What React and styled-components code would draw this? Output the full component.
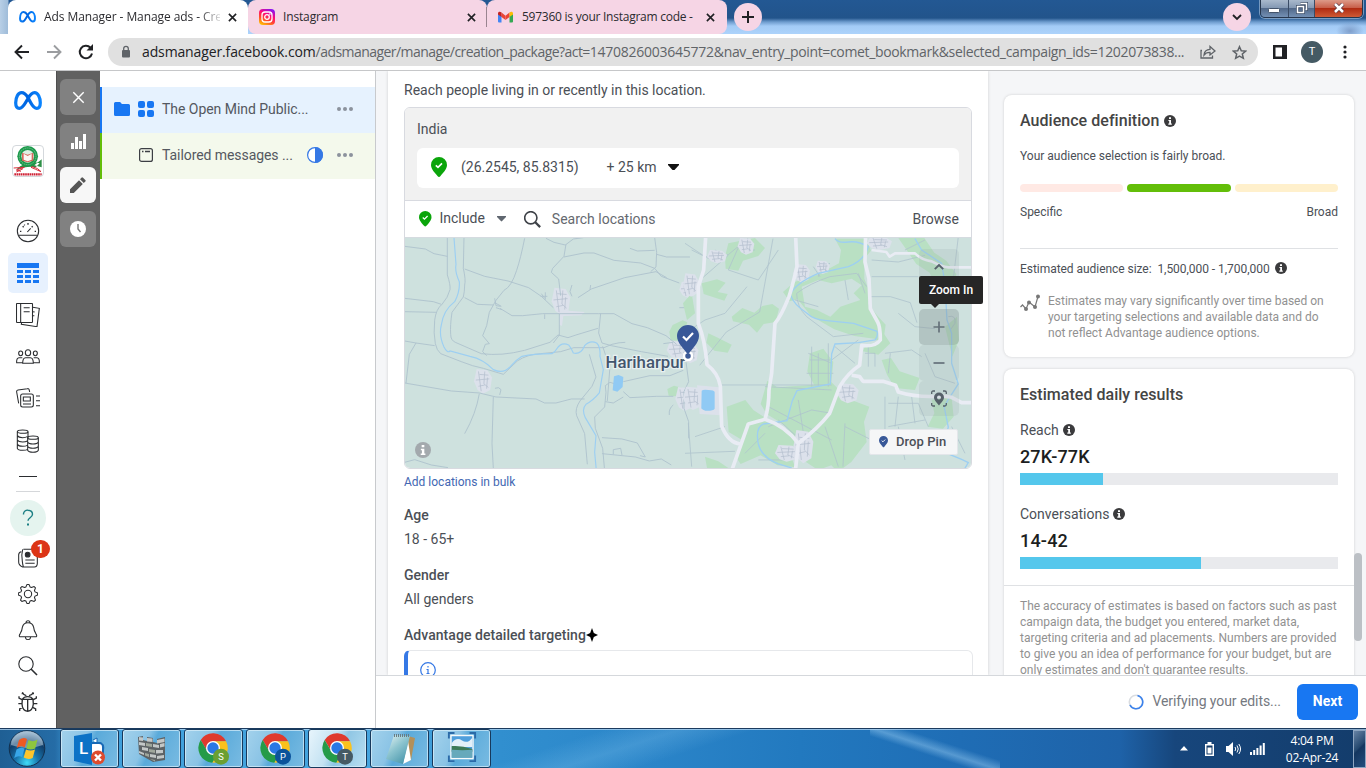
import React from "react";
import styled, { createGlobalStyle } from "styled-components";

const Global = createGlobalStyle`
  * { box-sizing: border-box; }
  html, body { margin: 0; padding: 0; height: 768px; overflow: hidden; }
  body { font-family: Roboto, "Liberation Sans", sans-serif; font-size: 14px; color: #444950; background: #fff; }
  svg { display: block; flex: none; }
`;

/* ---------- shell ---------- */
const Screen = styled.div`
  width: 1366px;
  height: 768px;
  display: flex;
  flex-direction: column;
  overflow: hidden;
`;
const Label = styled.span`
  font-size: ${(p) => p.$size || 14}px;
  line-height: ${(p) => p.$line || 20}px;
  font-weight: ${(p) => p.$weight || 400};
  color: ${(p) => p.$color || "#4b4f56"};
  letter-spacing: ${(p) => p.$track || 0}px;
  white-space: nowrap;
`;

/* ---------- browser ---------- */
const TabStrip = styled.div`
  height: 34px;
  flex: none;
  display: flex;
  padding-left: 8px;
  background:
    radial-gradient(ellipse 14px 9px at 1350px 31px, #7f9fcb, transparent),
    linear-gradient(90deg, #b8cfe6 0, #9fbcd9 8px, transparent 9px),
    linear-gradient(180deg, #235893 0, #22548b 18px, #6f9dcf 22px, #a3cbf6 26px, #add3fb 34px);
`;
const TabShell = styled.div`
  width: ${(p) => p.$w}px;
  height: 34px;
  display: flex;
  align-items: center;
  padding: 0 ${(p) => p.$pr || 11}px 0 11px;
  background: ${(p) => (p.$active ? "#fff" : "#f6d5e5")};
  border-radius: ${(p) => (p.$active ? "8px 8px 0 0" : "8px")};
  border-bottom-left-radius: ${(p) => (p.$active ? 0 : p.$flush ? 0 : 8)}px;
  border-bottom-right-radius: ${(p) => (p.$active || p.$flushR ? 0 : 8)}px;
  gap: ${(p) => p.$gap || 8}px;
`;
const TabTitle = styled.span`
  flex: 1;
  min-width: 0;
  white-space: nowrap;
  font: 12px/18px "Open Sans", "Noto Sans", sans-serif;
  letter-spacing: ${(p) => p.$track || 0}px;
  color: #2b2b2f;
  mask-image: ${(p) => (p.$fade ? "linear-gradient(90deg,#000 88%,rgba(0,0,0,.15) 100%)" : "none")};
`;
const TabRule = styled.div`
  width: 1px;
  height: 20px;
  margin: 7px 0 0 -1px;
  background: #9a8490;
`;
const RoundButton = styled.div`
  width: 28px;
  height: 28px;
  margin: 3px 0 0 ${(p) => p.$ml}px;
  border-radius: 50%;
  background: #f6d5e5;
  display: grid;
  place-items: center;
`;
const WindowControls = styled.div`
  display: flex;
  width: 103px;
  height: 18px;
  margin-left: 9px;
  border: 1px solid #26364d;
  border-top: 0;
  border-radius: 0 0 5px 5px;
  overflow: hidden;
  box-shadow: 0 0 0 1px rgba(200, 220, 240, 0.5);
`;
const WindowButton = styled.div`
  width: ${(p) => p.$w}px;
  padding-bottom: ${(p) => p.$pb || 0}px;
  padding-top: ${(p) => p.$pt || 0}px;
  display: grid;
  place-items: center;
  border-right: ${(p) => (p.$close ? "0" : "1px solid #3a4c66")};
  background: ${(p) =>
    p.$close
      ? "linear-gradient(180deg,#dd9a88 0,#c8604a 45%,#b02c12 50%,#cf5a35 100%)"
      : "linear-gradient(180deg,#a9b9cc 0,#8499b4 45%,#52698a 50%,#7390b4 100%)"};
`;
const Toolbar = styled.div`
  height: 37px;
  flex: none;
  display: flex;
  align-items: center;
  background: #fff;
  border-bottom: 1px solid #c6c7c9;
  padding: 0 13px 0 14px;
`;
const NavIcons = styled.div`
  display: flex;
  gap: 16px;
  width: 94px;
`;
const AddressBar = styled.div`
  width: 1150px;
  height: 28px;
  flex: none;
  border-radius: 14px;
  background: #e0e0e0;
  display: flex;
  align-items: center;
  padding: 0 10px 0 12px;
`;
const Url = styled.div`
  width: 1058px;
  flex: none;
  margin-left: 10px;
  white-space: nowrap;
  font: 14px/20px "Open Sans", "Noto Sans", sans-serif;
  color: #606468;
`;
const UrlPart = styled.span`
  letter-spacing: ${(p) => p.$track}px;
  color: ${(p) => (p.$host ? "#202124" : "inherit")};
`;
const Profile = styled.div`
  width: 22px;
  height: 22px;
  margin: 0 20px 0 14px;
  border-radius: 50%;
  background: #455a64;
  color: #fff;
  font-size: 11px;
  line-height: 22px;
  text-align: center;
`;

/* ---------- page ---------- */
const Page = styled.div`
  height: 657px;
  flex: none;
  display: flex;
`;
const GlobalNav = styled.nav`
  width: 56px;
  display: flex;
  flex-direction: column;
  align-items: center;
  background: #fff;
`;
const NavCell = styled.div`
  width: 56px;
  height: ${(p) => p.$h || 42}px;
  margin-bottom: ${(p) => p.$mb || 0}px;
  display: grid;
  place-items: center;
  position: relative;
`;
const ActiveCell = styled.div`
  width: 40px;
  height: 40px;
  border-radius: 5px;
  background: #e7f1fe;
  display: grid;
  place-items: center;
`;
const Avatar = styled.div`
  width: 32px;
  height: 32px;
  border: 1px solid #d4d8dc;
  border-radius: 4px;
  overflow: hidden;
  background: #fff;
`;
const Dash = styled.div`
  width: ${(p) => p.$w}px;
  height: 1px;
  margin-top: ${(p) => p.$mt}px;
  background: ${(p) => p.$c};
`;
const HelpCircle = styled.div`
  width: 36px;
  height: 36px;
  margin: 8px 0 4px;
  border-radius: 50%;
  background: #e5f4ef;
  display: grid;
  place-items: center;
`;
const Badge = styled.span`
  position: absolute;
  left: 31px;
  top: 0;
  width: 19px;
  height: 18px;
  border-radius: 9px;
  background: #dc3516;
  color: #fff;
  font: 700 12px/18px Roboto, sans-serif;
  text-align: center;
`;
const ModeRail = styled.div`
  width: 44px;
  padding: 8px 4px 8px 3px;
  display: flex;
  flex-direction: column;
  gap: 8px;
  background: #616161;
  border-left: 1px solid #4f4f4f;
`;
const ModeButton = styled.div`
  width: 36px;
  height: 36px;
  border-radius: 6px;
  display: grid;
  place-items: center;
  background: ${(p) => (p.$active ? "#f7f7f7" : "#818181")};
`;
const TreePanel = styled.div`
  width: 276px;
  padding-top: 16px;
  background: #fff;
  border-right: 1px solid #c8cacd;
`;
const TreeRow = styled.div`
  height: 46px;
  display: flex;
  align-items: center;
  padding: 0 22px 2px ${(p) => p.$indent}px;
  border-left: 2px solid ${(p) => p.$edge};
  background: ${(p) => p.$bg};
  gap: 8px;
`;
const TreeName = styled(Label)`
  flex: 1;
`;
const Workspace = styled.div`
  width: 990px;
  display: flex;
  flex-direction: column;
  background: #f5f6f8;
`;
const Columns = styled.div`
  height: 604px;
  display: flex;
  overflow: hidden;
  padding-left: 12px;
`;
const Editor = styled.div`
  width: 600px;
  padding: 9px 16px 0;
  background: #fff;
  box-shadow: 0 0 3px rgba(0, 0, 0, 0.16);
  display: flex;
  flex-direction: column;
  align-items: flex-start;
`;
const LocationBox = styled.div`
  width: 568px;
  height: 362px;
  flex: none;
  margin: 7px 0 3px;
  border: 1px solid #d8dae0;
  border-radius: 6px;
  position: relative;
`;
const Country = styled.div`
  height: 93px;
  padding: 11px 12px;
  background: #f1f1f1;
  border-bottom: 1px solid #d8dae0;
  border-radius: 5px 5px 0 0;
`;
const Place = styled.div`
  height: 40px;
  margin-top: 9px;
  border-radius: 6px;
  background: #fff;
  display: flex;
  align-items: center;
  padding: 0 14px 2px;
`;
const SearchRow = styled.div`
  height: 37px;
  display: flex;
  align-items: center;
  padding: 0 12px 0 14px;
  border-bottom: 1px solid #d5dbe0;
`;
const IncludeLabel = styled(Label)`
  padding-bottom: 2px;
`;
const Gap = styled.div`
  width: ${(p) => p.$w}px;
  flex: ${(p) => (p.$w ? "none" : 1)};
`;
const MapFrame = styled.div`
  height: 230px;
  border-radius: 0 0 5px 5px;
  overflow: hidden;
`;
const MapControls = styled.div`
  position: absolute;
  right: 12px;
  top: 141px;
  width: 40px;
  display: flex;
  flex-direction: column;
`;
const MapButton = styled.div`
  height: ${(p) => p.$h || 36}px;
  margin-bottom: ${(p) => p.$mb || 0}px;
  border-radius: 5px;
  display: grid;
  place-items: center;
  background: ${(p) => (p.$hot ? "rgba(125,140,140,.34)" : "rgba(150,165,165,.18)")};
`;
const Tooltip = styled.div`
  position: absolute;
  left: 514px;
  top: 168px;
  width: 64px;
  height: 28px;
  border-radius: 2px;
  background: #262626;
  color: #fff;
  font-size: 12px;
  font-weight: 500;
  line-height: 28px;
  text-align: center;
  &::after {
    content: "";
    position: absolute;
    left: 12px;
    top: 28px;
    border: 4px solid transparent;
    border-top-color: #262626;
  }
`;
const DropPin = styled.div`
  position: absolute;
  right: 13px;
  bottom: 13px;
  width: 89px;
  height: 26px;
  border-radius: 2px;
  background: #f5f6f7;
  border: 1px solid #e3e6ea;
  display: flex;
  align-items: center;
  gap: 8px;
  padding-left: 9px;
`;
const MapInfo = styled.div`
  position: absolute;
  left: 10px;
  bottom: 10px;
`;
const Heading = styled(Label)`
  margin-top: ${(p) => p.$mt}px;
  display: flex;
  align-items: center;
`;
const Notice = styled.div`
  width: 569px;
  height: 60px;
  flex: none;
  margin-top: 5px;
  padding: 11px 0 0 12px;
  border: 1px solid #e6e8eb;
  border-left: 4px solid #3578e5;
  border-radius: 6px;
`;
const Side = styled.aside`
  width: 350px;
  margin-left: 16px;
  padding-top: 24px;
  display: flex;
  flex-direction: column;
  gap: 12px;
`;
const Card = styled.section`
  height: ${(p) => p.$h}px;
  flex: none;
  border-radius: 8px;
  background: #fff;
  box-shadow: 0 0 3px rgba(0, 0, 0, 0.16);
  display: flex;
  flex-direction: column;
  padding: 0 16px;
`;
const Line = styled.div`
  display: flex;
  align-items: center;
  gap: ${(p) => p.$gap || 0}px;
  justify-content: ${(p) => (p.$spread ? "space-between" : "flex-start")};
  margin-top: ${(p) => p.$mt || 0}px;
`;
const Segment = styled.div`
  width: ${(p) => p.$w}px;
  height: 8px;
  border-radius: 4px;
  background: ${(p) => p.$c};
`;
const Rule = styled.div`
  height: 1px;
  margin: ${(p) => p.$m};
  background: #dfe1e4;
`;
const Paragraph = styled.p`
  margin: 0;
  font-size: 12px;
  line-height: 16px;
  color: #919191;
  letter-spacing: ${(p) => p.$track || 0}px;
  white-space: nowrap;
`;
const Bar = styled.div`
  height: 12px;
  margin-top: ${(p) => p.$mt}px;
  background: linear-gradient(90deg, #54c7ec ${(p) => p.$v}px, #e9eaed ${(p) => p.$v}px);
`;
const ScrollTrack = styled.div`
  width: 12px;
  padding-top: 482px;
`;
const ScrollThumb = styled.div`
  width: 8px;
  height: 88px;
  border-radius: 4px;
  background: #bcc0c5;
`;
const Footer = styled.footer`
  height: 53px;
  display: flex;
  align-items: center;
  justify-content: flex-end;
  padding-right: 8px;
  background: #fff;
  border-top: 1px solid #d5d8dc;
`;
const StatusText = styled(Label)`
  padding-bottom: 2px;
`;
const NextButton = styled.div`
  width: 61px;
  height: 36px;
  margin-left: 16px;
  border-radius: 6px;
  background: #1877f2;
  color: #fff;
  font-weight: 700;
  line-height: 35px;
  text-align: center;
`;

/* ---------- taskbar ---------- */
const Taskbar = styled.div`
  height: 40px;
  flex: none;
  display: flex;
  border-top: 1px solid #1c3b5e;
  box-shadow: inset 0 1px 0 rgba(190, 220, 245, 0.7);
  background:
    linear-gradient(198deg, transparent 38%, rgba(170, 218, 250, 0.4) 50%, transparent 60%) 870px 0 / 130px 40px no-repeat,
    linear-gradient(162deg, transparent 30%, rgba(150, 210, 245, 0.22) 50%, transparent 70%) 490px 0 / 260px 40px no-repeat,
    linear-gradient(90deg, #1f5f94 0, #256ca6 55px, #3f9fdb 75px, #45a5df 400px, #318fcf 500px, #2a84c8 660px, #2279bf 800px, #1f6db5 960px, #1e62a8 1120px, #17467c 1175px, #133c6b 1366px);
`;
const StartOrb = styled.div`
  width: 60px;
  flex: none;
  padding: 1px 0 0 8px;
`;
const TaskButton = styled.div`
  width: 59px;
  height: 39px;
  margin-right: 3px;
  border: 1px solid #17395c;
  border-radius: 3px;
  box-shadow: inset 0 0 0 1px rgba(225, 242, 252, 0.65);
  display: grid;
  place-items: center;
  background: ${(p) =>
    p.$active
      ? "linear-gradient(115deg,#e8f5fc 0,#c3e2f2 40%,#8fc6e4 55%,#b9dff1 100%)"
      : "linear-gradient(115deg,#a3d2ec 0,#8ac3e5 38%,#5aaada 50%,#79bbe2 100%)"};
`;
const Tray = styled.div`
  margin-left: auto;
  display: flex;
  align-items: center;
`;
const Clock = styled.div`
  width: 78px;
  margin-left: 8px;
  font: 12px/17px "Open Sans", "Noto Sans", sans-serif;
  letter-spacing: -0.3px;
  color: #fff;
  text-align: center;
`;
const ShowDesktop = styled.div`
  width: 13px;
  height: 38px;
  margin-left: 2px;
  border: 1px solid #8da5c1;
  background: linear-gradient(135deg, #6783a5 0, #24486f 45%, #143660 50%, #234d7d 100%);
`;

/* ---------- drawings ---------- */
const Cross = ({ size = 9, color = "#202124", w = 1.8 }) => (
  <svg width={size} height={size} viewBox="0 0 10 10">
    <path d="M1 1l8 8M9 1L1 9" stroke={color} strokeWidth={w} />
  </svg>
);
const MetaMark = ({ w }) => (
  <svg width={w} height={w * 0.68} viewBox="0 0 640 436">
    <defs>
      <linearGradient id="metaFill" x1="0" x2="1">
        <stop offset="0" stopColor="#0a7cf4" />
        <stop offset=".45" stopColor="#0064e0" />
        <stop offset="1" stopColor="#0a84ff" />
      </linearGradient>
    </defs>
    <g fill="none" stroke="url(#metaFill)" strokeWidth="74">
      <path d="M320 150C270 70 225 38 172 38C95 38 38 140 38 270C38 350 68 398 122 398C180 398 215 350 262 270L320 172C368 86 408 38 470 38C548 38 602 146 602 270C602 350 574 398 522 398C462 398 428 350 380 262Z" />
    </g>
  </svg>
);
const InstagramMark = () => (
  <svg width="16" height="16" viewBox="0 0 16 16">
    <defs>
      <linearGradient id="ig" x1=".2" y1="1" x2=".7" y2="0">
        <stop offset="0" stopColor="#ffc300" />
        <stop offset=".35" stopColor="#ff4a2c" />
        <stop offset=".65" stopColor="#ff0a78" />
        <stop offset="1" stopColor="#8a14f0" />
      </linearGradient>
    </defs>
    <rect width="16" height="16" rx="4" fill="url(#ig)" />
    <g fill="none" stroke="#fff" strokeWidth="1.3">
      <rect x="3" y="3" width="10" height="10" rx="3" />
      <circle cx="8" cy="8" r="2.3" />
    </g>
    <circle cx="10.9" cy="5.1" r=".8" fill="#fff" />
  </svg>
);
const GmailMark = () => (
  <svg width="15" height="12" viewBox="0 0 30 22">
    <path d="M0 4v16a2 2 0 0 0 2 2h5V8z" fill="#4285f4" />
    <path d="M30 4v16a2 2 0 0 1-2 2h-5V8z" fill="#34a853" />
    <path d="M23 2l-8 6.500V17l8-6z" fill="#ea4335" />
    <path d="M7 2l8 6.500V17l-8-6z" fill="#ea4335" />
    <path d="M0 4C0 0 4-1 7 2v9L0 6z" fill="#c5221f" />
    <path d="M30 4C30 0 26-1 23 2v9l7-5z" fill="#fbbc04" />
  </svg>
);
const Pin = ({ w, fill }) => (
  <svg width={w} height={w * 1.25} viewBox="0 0 16 20">
    <path d="M8 0a8 8 0 0 1 8 8c0 4-4 8-6.500 11q-1.500 1.800-3 0C4 16 0 12 0 8a8 8 0 0 1 8-8z" fill={fill} />
    <path d="M4.800 8.300l2.200 2.100 4-4" fill="none" stroke="#fff" strokeWidth="1.600" />
  </svg>
);
const Info = ({ size = 12, fill = "#3b3b3d" }) => (
  <svg width={size} height={size} viewBox="0 0 12 12">
    <circle cx="6" cy="6" r="6" fill={fill} />
    <path d="M5 2.300h2v1.600H5zM4.400 5H7v3.600h.8v1.100H4.300V8.600h.9V6.100h-.8z" fill="#fff" />
  </svg>
);
const Caret = ({ w, fill }) => (
  <svg width={w} height={w * 0.6} viewBox="0 0 10 6">
    <path d="M0 0h10v1L5.700 5.700q-.7.600-1.400 0L0 1z" fill={fill} />
  </svg>
);
const Dots = () => (
  <svg width="16" height="4" viewBox="0 0 16 4" fill="#8c939d">
    <circle cx="2" cy="2" r="2" /><circle cx="8" cy="2" r="2" /><circle cx="14" cy="2" r="2" />
  </svg>
);
const Magnifier = ({ size, w, color }) => (
  <svg width={size} height={size} viewBox="0 0 20 20" fill="none" stroke={color} strokeWidth={w}>
    <circle cx="8" cy="8" r="7.200" />
    <path d="M13 13l6 6" strokeWidth={w * 1.4} />
  </svg>
);
/* Line icons share one frame with a thin dark stroke. */
const LineIcon = ({ children, box = "0 0 72 72", size = 24, w = 3.2 }) => (
  <svg width={size} height={size} viewBox={box} fill="none" stroke="#2b2d30" strokeWidth={w}>
    {children}
  </svg>
);
const Gauge = () => (
  <LineIcon>
    <circle cx="36" cy="36" r="32" />
    <path d="M7 49H65M34 39L44 28" />
    <path d="M12 37h4M20 22l3 3M36 12v5M50 22l-3 3M56 37h4M25 17l1 2" strokeWidth="4" />
  </LineIcon>
);
const TableIcon = () => (
  <svg width="22" height="20" viewBox="0 0 22 20" fill="#1877f2">
    <path d="M0 0h22v5H0zM0 7h6v3H0zM8 7h6v3H8zM16 7h6v3h-6zM0 12h6v3H0zM8 12h6v3H8zM16 12h6v3h-6zM0 17h6v3H0zM8 17h6v3H8zM16 17h6v3h-6z" />
  </svg>
);
const Books = () => (
  <LineIcon>
    <rect x="1.500" y="1.500" width="48" height="57" rx="2" />
    <path d="M14 1v58M23 14h18M23 26h18M50 13l20 3-7 55-47-7 1-6M50 26l6 1M50 38l5 .5" />
  </LineIcon>
);
const People = () => (
  <LineIcon>
    <ellipse cx="36" cy="23" rx="8" ry="9" />
    <ellipse cx="14" cy="25" rx="6" ry="7" />
    <ellipse cx="58" cy="25" rx="6" ry="7" />
    <path d="M20 55q0-17 9-17h14q9 0 9 17zM20 53H2q-1-14 7-15h10M52 53h18q1-14-7-15H53" />
  </LineIcon>
);
const Catalog = () => (
  <LineIcon>
    <rect x="14" y="21" width="38" height="39" rx="6" />
    <path d="M22 30h21v12H22zM21 51h24M60 27h12M60 41h12M60 56h12M8 49L2 15q-1-5 4-6l28-4q5-1 6 5l1 5" />
  </LineIcon>
);
const Coins = () => (
  <LineIcon>
    <ellipse cx="20" cy="8" rx="16" ry="5" />
    <ellipse cx="51" cy="26" rx="16" ry="5" />
    <path d="M4 8v50q2 6 16 6 11 0 15-3M36 8v18M4 20q4 6 16 6 9 0 14-3M4 33q4 6 16 6 9 0 14-3M4 46q4 6 16 6 9 0 14-3M35 26v38q3 6 16 6 13 0 16-6V26M35 39q3 6 16 6 13 0 16-6M35 52q3 6 16 6 13 0 16-6" />
  </LineIcon>
);
const News = () => (
  <LineIcon size={20} box="0 0 60 60">
    <path d="M16 4h34q8 0 8 8v34q0 11-9 11H14Q2 52 2 42V20q1-8 8-9M14 4q-5 18-1 36 1 10 3 16M22 36h28M22 46h28" />
    <circle cx="29" cy="20" r="7" fill="#2b2d30" />
  </LineIcon>
);
const Gear = () => {
  const pts = [];
  for (let i = 0; i < 32; i++) {
    const a = ((i - 0.5) * Math.PI) / 16;
    const r = i % 4 < 2 ? 29 : 22;
    pts.push(`${(30 + r * Math.sin(a)).toFixed(1)} ${(30 - r * Math.cos(a)).toFixed(1)}`);
  }
  return (
    <LineIcon size={20} box="0 0 60 60">
      <path d={`M${pts.join("L")}Z`} strokeLinejoin="round" />
      <circle cx="30" cy="30" r="11" />
    </LineIcon>
  );
};
const Bell = () => (
  <LineIcon size={20} box="0 0 60 60">
    <path d="M5 50Q2 47 7 40 12 32 13 22 16 8 30 8 44 8 47 22 48 32 53 40 58 47 55 50ZM24 8q0-6 6-6t6 6M22 51q1 8 8 8t8-8" />
  </LineIcon>
);
const Bug = () => (
  <LineIcon size={20} box="0 0 60 60" w={4}>
    <path d="M13 22q5-8 16-8t16 8l1 14q-2 20-17 22Q13 56 12 36zM14 22h30M29 22v36M13 1q3 8 12 10M46 1q-3 8-13 10M11 5h6M42 5h6M12 23L3 18v-5M46 23l9-5v-5M12 35H1M46 35h12M14 46l-9 5v6M44 46l9 5v6" />
  </LineIcon>
);
const AcademyLogo = () => (
  <svg width="30" height="30" viewBox="0 0 90 90">
    <path d="M86 40l-22 18 22 6zM12 68q32-28 68-16l-12 12q-28-6-54 6z" fill="#2d8f46" />
    <circle cx="44" cy="31" r="31" fill="#1b9a4b" />
    <circle cx="44" cy="31" r="25" fill="none" stroke="#8fc7a3" strokeWidth="3" strokeDasharray="3 3" />
    <circle cx="44" cy="31" r="19" fill="#dff0e4" />
    <path d="M27 20l17 6 17-6v24l-17 5-17-5z" fill="#d5685c" />
    <path d="M32 23l12 7 12-7v18l-12 5-12-5z" fill="#fbf7f4" />
    <path d="M2 66l32-2-24 8 14 4M10 78l20-10M58 62q18 4 26 15-18-8-30-13z" fill="none" stroke="#d62f3c" strokeWidth="3" />
    <path d="M4 85h82" stroke="#cf2034" strokeWidth="7" strokeDasharray="5 1.500" />
  </svg>
);
const ChromeTask = ({ letter, color }) => (
  <svg width="34" height="34" viewBox="0 0 51 51">
    <path d="M5.540 12.030A22 22 0 0 1 43.600 14L24 14 15.340 29z" fill="#df3a2e" />
    <path d="M43.600 14A22 22 0 0 1 22.860 45.970L32.660 29 24 14z" fill="#fbc11c" />
    <path d="M22.860 45.970A22 22 0 0 1 5.540 12.030L15.340 29H32.660z" fill="#259b48" />
    <circle cx="24" cy="24" r="10.500" fill="#fff" />
    <circle cx="24" cy="24" r="8.500" fill="#2a78e4" />
    <circle cx="36" cy="37" r="12" fill={color} />
    <text x="36" y="42" fontSize="14" fill="#fff" textAnchor="middle" fontFamily="Roboto, sans-serif">{letter}</text>
  </svg>
);
const Orb = () => (
  <svg width="38" height="38" viewBox="0 0 38 38">
    <defs>
      <radialGradient id="orb" cx=".5" cy=".9" r=".9">
        <stop offset="0" stopColor="#3fdcf8" />
        <stop offset=".35" stopColor="#1976ae" />
        <stop offset=".7" stopColor="#103e6a" />
        <stop offset="1" stopColor="#8fb0cb" />
      </radialGradient>
    </defs>
    <circle cx="19" cy="18.500" r="17.800" fill="url(#orb)" stroke="#12304e" />
    <path d="M3 15a16 14 0 0 1 32 0q-16 6-32 0z" fill="#dcebf5" opacity=".45" />
    <path d="M11 10q4.500-3.500 8-1l-2.300 8.500q-4-2.500-8 .5z" fill="#ee5a24" />
    <path d="M20.500 10q4.500 2.500 9-.5l-2.300 9q-4.500 2-8.900 0z" fill="#8ec63f" />
    <path d="M8.500 19.500q4-3 8-1l-2.300 8.500q-4-2-8 1z" fill="#38a6e8" />
    <path d="M18 19.500q4.500 2 9 0l-2.300 8.500q-4.500 2-9-.5z" fill="#fdc52c" />
  </svg>
);
const LyncTask = () => (
  <svg width="34" height="34" viewBox="0 0 34 34">
    <path d="M20 8l4-2v5c6-2 8 4 6 8" fill="#fff" stroke="#1769b5" />
    <rect x="16" y="11" width="14" height="13" rx="4" fill="#fff" stroke="#1769b5" strokeWidth="2" />
    <path d="M1 4L19 1v32L1 29z" fill="#0c72c6" />
    <text x="6" y="22" fontSize="17" fontWeight="500" fill="#fff" fontFamily="Roboto, sans-serif">L</text>
    <circle cx="25" cy="25.500" r="7" fill="#dd4b2e" />
    <path d="M22 22.500l6 6M28 22.500l-6 6" stroke="#fff" strokeWidth="2.400" />
  </svg>
);
const WallTask = () => (
  <svg width="32" height="30" viewBox="0 0 32 30">
    <path d="M2 3l5-1v4l4 1V3l6 1v4l4 1V5l8-2v23l-12 2L3 20z" fill="#5d6265" />
    <g fill="#c3c7c7">
      <path d="M3 3l4 .5v3.500L3 6.500zM11 4l5.500.6v3.400L11 7.500zM21 6l7.500-1.500v3.500L21 9.500zM3 8l6 1v3l-6-1zM17 10l6 1v3l-6-1zM24 10l4.500-1v3.500l-4.500 1zM6 13l6 1v3l-6-1zM20 16h7v3l-7 .5zM3 17l5 2v2l-5-2zM14 20l6 1v3l-6-1zM21 22l7-1v3l-7 1z" />
    </g>
    <g fill="#a0a79c">
      <path d="M10 9l6 1v3l-6-1zM13 15l6 1v3l-6-1zM9 19l4 1v3l-4-1.500zM14 25l5 1v1.500z" />
    </g>
  </svg>
);
const NotepadTask = () => (
  <svg width="32" height="34" viewBox="0 0 32 34">
    <defs>
      <linearGradient id="pad" x2=".7" y2="1">
        <stop offset="0" stopColor="#e8f4f3" /><stop offset=".5" stopColor="#8cc4cf" /><stop offset="1" stopColor="#4b98ad" />
      </linearGradient>
    </defs>
    <path d="M24 4l7 2-4 22-7 3z" fill="#b3905a" />
    <path d="M24 9l3 19-8 4z" fill="#fff" />
    <path d="M10 3l16 1-7 28L2 27z" fill="url(#pad)" />
    <path d="M10 3.500h16" stroke="#697d83" strokeWidth="3" strokeDasharray="1 1" />
  </svg>
);
const PhotoFrame = styled.div`
  padding-bottom: 4px;
`;
const PhotoTask = () => (
  <PhotoFrame>
    <svg width="30" height="30" viewBox="0 0 30 32">
      <path d="M1 7V1h6M23 1h6v6M29 25v6h-6M7 31H1v-6" fill="none" stroke="#2b6aa8" strokeWidth="2" />
      <rect x="2.500" y="3" width="25" height="26" rx="1" fill="#f7fafa" />
      <rect x="4" y="4.500" width="22" height="23" fill="#4f9fdc" />
      <path d="M4 12q5-7 11-3t11-3v10H4z" fill="#e3f0f9" />
      <path d="M4 15q10-1 22 3v3H4z" fill="#3d7a58" />
      <path d="M4 19q12 1 22 0v8.500H4z" fill="#67a9bb" />
    </svg>
  </PhotoFrame>
);

/* ---------- map ---------- */
/* Villages are clusters of short lanes over a pale patch. */
const Village = ({ x, y, w, h }) => (
  <g transform={`translate(${x} ${y})`}>
    <path
      d={`M${w * 0.15} 0L${w * 0.75} ${h * 0.05}L${w} ${h * 0.35}L${w * 0.9} ${h * 0.85}L${w * 0.5} ${h}L${w * 0.2} ${h * 0.85}L0 ${h * 0.5}Z`}
      fill="#dce1eb"
    />
    <path
      d={`M${w * 0.25} ${h * 0.1}L${w * 0.4} ${h * 0.9}M${w * 0.1} ${h * 0.45}L${w * 0.85} ${h * 0.4}M${w * 0.6} ${h * 0.1}L${w * 0.55} ${h * 0.6}L${w * 0.8} ${h * 0.75}M${w * 0.25} ${h * 0.7}L${w * 0.6} ${h * 0.65}M${w * 0.3} ${h * 0.22}L${w * 0.8} ${h * 0.25}M${w * 0.75} ${h * 0.35}L${w * 0.7} ${h * 0.8}`}
      stroke="#b3bfce" strokeWidth="2.200" fill="none"
    />
  </g>
);
const MapArt = () => (
  <svg width="566" height="230" viewBox="0 0 566 230">
    <rect width="566" height="230" fill="#cee1de" />
    <g transform="translate(-5 -3) scale(.3333)">
      <g fill="#b9e0c3">
        <path d="M808 290l10-20 30-14 14 6-6 20-20 22 6 14-30-2zM862 198l12-10v50h-14zM802 462l20-10 24 6 4 12-24 14-20-2z" />
      </g>
      <Village x={455} y={158} w={56} h={82} />
      <path d="M480 225l74 6-10 10-54 2-4 30-8-4z" fill="#dce1eb" />
      <Village x={222} y={402} w={54} h={74} />
      <Village x={838} y={140} w={50} h={48} />
      <Village x={800} y={318} w={70} h={56} />
      <Village x={826} y={456} w={56} h={72} />
      <g fill="none" stroke="#aec2cd" strokeWidth="2.700">
        <path d="M142 8V120q10 30 8 44-6 24-24 44-18 14-22 48-4 40 2 70 4 20 16 30l62 24q34 14 66 20l60 18 42-40q30-20 70-22l60-6 40-12h90l24-10q22-6 40-6" />
        <path d="M192 8l-2 92q8 36 4 50 0 20-4 36-18 24-34 46-6 40-4 66 0 18 14 24l78 34q60 8 130-10l76-24 24-22 30 8 24-8 66-20" />
        <path d="M14 34l62 8 26 14 40 8M14 190l86 10 24 8M14 230l94 2M14 318l34 6 56 8M48 324l-20 34-10 86M14 444l140 24 84 6 50 12 120 6 26 12h34l46-12h40M238 476q-10 60-44 120M280 486l-4 140 4 74" />
        <path d="M194 102l60 22 70 14 62 20 38 26 36 34M194 188l38 20 48 2M374 10q-12 60-24 96-16 50-38 60l-24 30-20 36-8 40-12 30 20 24-12 2-8 22 12 12" />
        <path d="M284 190l4 22 14 2M300 220l36 22h32l60-6h50l8 0h110l46 0 54 30 46 12 56 24 32 26" />
        <path d="M438 10l24 12 34 8 24-18 30-4M498 28l-6 36-34 36-4 12 22 20 6 50M492 66l60-12h30l60 22 80 8 42 16 20 24 54 20M690 40l22 8 52-2M764 8l6 44-2 44-16 14M770 58l30 8h70M534 188l40-26 100-34 94-18 32 18M478 236v64M460 324l18-24M602 236l-6 58 10 30 28 8 90 18 80 14M572 150l-2 14M516 150l-6 20 6 14" />
        <path d="M568 358l20 68-12 28-36 44q-16 24-10 44l24 54 8 92M608 334l10 30M650 448l-20-6-14 10 2 20-4 44-30 30 2 34 22 60 8 90M632 368l-10 130M616 500l24 4 30-18M670 440l80-18h60l40-16M670 470l20 18 80-4h50M606 608l60 4 46 12 24 42-16-4M606 656l100 10 42 12 36-6 30 18M640 658v-14l22-4 4 20M14 682l30-8 50 16 50 8M858 380l8 60-14 30v50l14 40v50" />
        <path d="M424 176l10 14M436 172v22M422 184h20M434 238v14M286 204l18 10M288 218l18 6M285 460q12-6 18 4l-4 16M838 218h30M790 326l30-4M820 510q-14 10-12 30" />
      </g>
      <g fill="none" stroke="#9dcff2" strokeWidth="3.500">
        <path d="M162 8l6 80q-4 22 10 52 2 30-14 60-34 26-40 70-8 30 8 66 10 20 18 12l60 16q40 8 70 40 30 14 50-8 16-20 36-32 36-8 90-8 10-6 14-14 14-22 36-12 8 10 14 24 22 6 34-22 16-18 36-8 12 12 10 40l10 40-12 70q-20 24-40 34-14 14-2 40l32 54-4 50 6 64" />
      </g>
      <path d="M642 424l14-4 14 6-2 30-16 14-14-4z" fill="#90caf4" />
    </g>
    <g transform="translate(280 -98) scale(.3333)">
      <g fill="#b9e0c3">
        <path d="M130 310l80-16 30 30-20 24-46 14-14 30-38-6-2-36z" />
        <path d="M50 430l46-12 26 10-24 28 30 6-10 20-62-20z" />
        <path d="M450 296h94l14 36-20 24v60l16 40-4 36 28 36 24 26-8 58-26-16-60-8-60-20-70-40-40-50-24 6-20-28 34-30 70-22 64-34 6-40z" />
        <path d="M140 530l32-26 36 14 24-20 30-6 20 14-10 40-36 6-20 26-24-24-48-10z" />
        <path d="M70 580l30 14 40 20-12 24-40-6-24-24z" />
        <path d="M20 460l10 60-24 20-12-50z" />
        <path d="M375 640l40-14 30 40-6 60 50 50 64 24-16 46 8 60-46 60-40 30-20-20-40 14-60-40-10-60-30-34-54-34-18-30 20-70 30 20 110-8-20-40z" />
        <path d="M560 520l26 20 10 40 20 30-36 34-46-10 8-20 46-10z" />
        <path d="M590 660l28-6 26 40 60 20-14 36-60-6-24-40z" />
        <path d="M640 294h78l30 44 36 24 30 40-10 66-50-20-20-50-40-26z" />
        <path d="M125 800l56-20 24 30 40 26 60 30 30 40-20 36 16 40-54-6-50-30-60 26-14-20 22-50-44-26z" />
        <path d="M60 950l40 14 30 20H66zM740 780l60-10 6 60-32 36-46-6 20-40zM780 560l36-30 6 70-20 50z" />
      </g>
      {/* a pale clearing inside the river bend */}
      <path d="M350 440l50-20 40 10 60-14 30 20-24 24 20 20-60 20-30 30-40-20-36-10z" fill="#cee1de" />
      <g fill="none" stroke="#afc3cd" strokeWidth="2.400">
        <path d="M264 296l-40 220-100 60-80 100M0 310l60 40 70-6 60-50M130 346l-80 70M170 300l-40 90 90 30 60-90M0 580l60-40 60-20 66-80M110 735h330M240 740l200 10M330 480l70 20M720 300l-60 30M800 460l20-170M560 410h140M560 360l80 6 80-20M556 470h60l60 18 20 60M640 520l50 40 60 6M600 640l80-10 30 20M610 700l6-60" />
        <path d="M600 770v140M610 790h90l30 70M610 860l110-20M640 770l-10 90M680 770l10 80" />
        <path d="M335 460q40-30 100-50l80-10 30 40M335 460q0 40 30 70l80 60 90-10M480 420l10 60M370 640l70 30M380 620v120M400 640v100M430 610v130M375 660h60M365 700h80M450 620l60 50M440 660l80-60M520 400l20 60" />
        <path d="M250 800l190 100M250 860l130-50 60 10M280 840l90 80M340 780l20 130M420 860l40 120M480 850l-6 130M10 850l10 130M120 860l-90 30M0 940l150-6M180 940l60-60M220 960h80M560 900l-80-40M800 860l40 80M720 640l30 70 60 20M640 860l20 100" />
        <path d="M385 380l20 30M410 370l-10 40M415 380l20-10M20 330l60 30M90 330l30 20M170 300l30 30M180 330h30M540 640h30v40M550 620v60M790 530q24-6 20 20l-14 20" />
      </g>
      <Village x={66} y={330} w={60} h={40} />
      <Village x={158} y={294} w={50} h={50} />
      <Village x={-6} y={400} w={48} h={70} />
      <Village x={325} y={372} w={50} h={56} />
      <Village x={392} y={362} w={42} h={40} />
      <Village x={545} y={290} w={76} h={40} />
      <Village x={455} y={730} w={66} h={60} />
      <Village x={-10} y={610} w={50} h={60} />
      <Village x={-6} y={740} w={60} h={70} />
      <Village x={270} y={915} w={70} h={50} />
      <Village x={325} y={870} w={60} h={100} />
      <path d="M36 736l66 6 6 84-64-4z" fill="#dce1eb" />
      <g fill="none" stroke="#9dcff2" strokeWidth="4">
        <path d="M450 296q10 14 40 10t60 14q-10 40-60 60l-90 20q-70 30-84 64 10 30 50 56 20 20 60 22l80 8 70 24q4 14-6 26l-50 8-70 4-10 30-4 90-100 20-14 30-16 60-70 10q-26 10-16 60 10 40 60 60l40 12M690 296l20 34 60 40 10 60 6 110 14 40v90l20 62-32 50-10 20 12 60-20 60 20 20 40 16 20 10-30 50" />
      </g>
      <g fill="none" stroke="#e9ecf4" strokeWidth="11" strokeLinejoin="round">
        <path d="M62 290l-6 100-16 50v110q20 50 26 124 34 26 40 64l4 120q20 50 56 54M332 290l4 90q-14 60-24 90-24 60-42 80l-10 150-8 50q0 50-12 88l-50 14-50 140M240 838q60 20 100 72l-8 76M340 910q60-46 94-90l30-80q24-40 60-64l6-60q40 6 56-16 0-40-8-54l-22-40-4-90-12-50 2-90 30-20M500 706l24 4 10 14h60l38 12 8 20q60 18 130 12l30 4 30 16h30" />
        <path d="M560 330l44 6 10 14 16-10h60q20 20 50 24 30 16 50 18h70" strokeWidth="8" />
      </g>
      <path d="M50 752q4-4 20-2 18 0 19 6v50q-4 7-28 6-12-4-12-8z" fill="#90caf4" />
    </g>
    <g>
      <text
        x="200.500" y="130" fontSize="16.500" fontWeight="500" textLength="80" lengthAdjust="spacingAndGlyphs"
        fontFamily="Roboto, sans-serif" fill="#43556d" stroke="#e8f0f1" strokeWidth="2.500" paintOrder="stroke"
      >
        Hariharpur
      </text>
      <circle cx="283" cy="118" r="4" fill="#3d5a96" stroke="#fff" strokeWidth="2.500" />
      <path d="M283 87a11 11 0 0 1 11 11c0 7-7 13-11 18.500-4-5.500-11-11.500-11-18.500a11 11 0 0 1 11-11z" fill="#385898" />
      <path d="M278 98.500l3.500 3.500 6.500-7" fill="none" stroke="#fff" strokeWidth="2.200" />
    </g>
  </svg>
);

function Browser() {
  return (
    <>
      <TabStrip>
        <TabShell $w={240} $active>
          <MetaMark w={17} />
          <TabTitle $track={-0.08} $fade>Ads Manager - Manage ads - Cre</TabTitle>
          <Cross />
        </TabShell>
        <TabShell $w={239} $flushR>
          <InstagramMark />
          <TabTitle $track={-0.15}>Instagram</TabTitle>
          <Cross />
        </TabShell>
        <TabRule />
        <TabShell $w={240} $flush $gap={9} $pr={12}>
          <GmailMark />
          <TabTitle $track={-0.25}>597360 is your Instagram code -</TabTitle>
          <Cross />
        </TabShell>
        <RoundButton $ml={7}>
          <svg width="12" height="12" viewBox="0 0 12 12"><path d="M6 0v12M0 6h12" stroke="#202124" strokeWidth="2" /></svg>
        </RoundButton>
        <Gap />
        <RoundButton $ml={0}>
          <svg width="10" height="7" viewBox="0 0 10 7"><path d="M1 1l4 4 4-4" fill="none" stroke="#202124" strokeWidth="1.800" /></svg>
        </RoundButton>
        <WindowControls>
          <WindowButton $w={28} $pt={3}>
            <svg width="12" height="5" viewBox="0 0 12 5"><rect x=".5" y=".5" width="11" height="4" rx="1" fill="#fff" stroke="#44546b" /></svg>
          </WindowButton>
          <WindowButton $w={27} $pb={2}>
            <svg width="12" height="12" viewBox="0 0 12 12" fill="none">
              <path d="M4.500 1.500h6v6h-1M1.500 4.500h6v6h-6z" stroke="#3e4f68" strokeWidth="3" />
              <path d="M4.500 1.500h6v6h-1M1.500 4.500h6v6h-6z" stroke="#fff" strokeWidth="1.500" />
            </svg>
          </WindowButton>
          <WindowButton $w={47} $close $pb={2}>
            <svg width="12" height="10" viewBox="0 0 12 10">
              <path d="M2 1l8 8M10 1L2 9" stroke="#5a3540" strokeWidth="4" />
              <path d="M2 1l8 8M10 1L2 9" stroke="#fff" strokeWidth="2.500" />
            </svg>
          </WindowButton>
        </WindowControls>
        <Gap $w={3} />
      </TabStrip>
      <Toolbar>
        <NavIcons>
          <svg width="16" height="16" viewBox="0 0 16 16" fill="none" stroke="#202124" strokeWidth="1.900"><path d="M15 8H2M8 1.500L1.500 8 8 14.500" /></svg>
          <svg width="16" height="16" viewBox="0 0 16 16" fill="none" stroke="#9b9da0" strokeWidth="1.900"><path d="M1 8h13M8 1.500L14.500 8 8 14.500" /></svg>
          <svg width="16" height="16" viewBox="0 0 16 16" fill="none" stroke="#202124" strokeWidth="2"><path d="M14 9.500A6.200 6.200 0 1 1 12.500 3.800L14 5.200" /><path d="M15 0v6.500H8.500z" fill="#202124" stroke="none" /></svg>
        </NavIcons>
        <AddressBar>
          <svg width="12" height="14" viewBox="0 0 12 14"><rect x="2" y="5" width="8" height="7.500" rx="1" fill="#5f6368" /><path d="M3.700 5V3.600a2.300 2.300 0 0 1 4.600 0V5" fill="none" stroke="#5f6368" strokeWidth="1.300" /></svg>
          <Url>
            <UrlPart $host $track={-0.13}>adsmanager.facebook.com</UrlPart>
            <UrlPart $track={-0.55}>/adsmanager/manage/creation_package?act=</UrlPart>
            <UrlPart $track={-0.25}>1470826003645772</UrlPart>
            <UrlPart $track={-0.35}>&amp;nav_entry_point=comet_bookmark&amp;selected_campaign_ids=1202073838...</UrlPart>
          </Url>
          <svg width="16" height="15" viewBox="0 0 16 15" fill="none" stroke="#5f6368" strokeWidth="1.300"><path d="M2 5.500H1V13h11.500v-2.500M4 10q.5-5.500 6-5.700V1.500L15 6l-5 4V7.300Q6 7.200 4 10z" /></svg>
          <Gap $w={16} />
          <svg width="15" height="15" viewBox="0 0 16 16" fill="none" stroke="#5f6368" strokeWidth="1.600"><path d="M8 1.800l1.900 4.300 4.700.4-3.600 3.100 1.100 4.600L8 11.800l-4.100 2.400L5 9.600 1.400 6.500l4.700-.4z" /></svg>
        </AddressBar>
        <Gap $w={15} />
        <svg width="14" height="14" viewBox="0 0 14 14"><path d="M0 0h14v14H0zM2.500 2.500v9H9v-9z" fill="#202124" fillRule="evenodd" /></svg>
        <Profile>T</Profile>
        <svg width="4" height="14" viewBox="0 0 4 14" fill="#202124"><circle cx="2" cy="2" r="1.600" /><circle cx="2" cy="7" r="1.600" /><circle cx="2" cy="12" r="1.600" /></svg>
      </Toolbar>
    </>
  );
}

function LeftNav() {
  return (
    <GlobalNav>
      <NavCell $h={60}><MetaMark w={28} /></NavCell>
      <NavCell $h={60} $mb={19}><Avatar><AcademyLogo /></Avatar></NavCell>
      <NavCell><Gauge /></NavCell>
      <NavCell><ActiveCell><TableIcon /></ActiveCell></NavCell>
      <NavCell><Books /></NavCell>
      <NavCell><People /></NavCell>
      <NavCell><Catalog /></NavCell>
      <NavCell><Coins /></NavCell>
      <Dash $w={18} $mt={14} $c="#2b2d30" />
      <Dash $w={24} $mt={14} $c="#d5d7da" />
      <HelpCircle>
        <svg width="12" height="18" viewBox="0 0 12 18" fill="none" stroke="#1c7f84" strokeWidth="1.400"><path d="M1.500 5.500V4.800A4 4 0 0 1 6 1.200q4.500.2 4.500 4c0 3.500-4.500 3.500-4.500 6.500" /><path d="M6 14.500v2" strokeWidth="2" /></svg>
      </HelpCircle>
      <NavCell $h={36}><News /><Badge>1</Badge></NavCell>
      <NavCell $h={36}><Gear /></NavCell>
      <NavCell $h={36}><Bell /></NavCell>
      <NavCell $h={36}><Magnifier size={20} w={1.1} color="#2b2d30" /></NavCell>
      <NavCell $h={36}><Bug /></NavCell>
    </GlobalNav>
  );
}

function CampaignTree() {
  return (
    <>
      <ModeRail>
        <ModeButton><Cross size={13} color="#fff" w={1.1} /></ModeButton>
        <ModeButton><svg width="15" height="15" viewBox="0 0 15 15" fill="#fff"><path d="M0 9h3v6H0zM4 3h3v12H4zM8 7h3v8H8zM12 0h3v15h-3z" /></svg></ModeButton>
        <ModeButton $active><svg width="16" height="16" viewBox="0 0 16 16" fill="#555"><path d="M0 12.200L9 3.200 12.800 7l-9 9H0zM10 2.200l1.400-1.500q.8-.8 1.600 0L15.300 3q.8.800 0 1.600L13.800 6z" /></svg></ModeButton>
        <ModeButton><svg width="16" height="16" viewBox="0 0 16 16"><circle cx="8" cy="8" r="8" fill="#fff" /><path d="M8 3v5l2.500 3" fill="none" stroke="#777" strokeWidth="1.400" /></svg></ModeButton>
      </ModeRail>
      <TreePanel>
        <TreeRow $edge="#1877f2" $bg="#e6f2fe" $indent={12}>
          <svg width="16" height="14" viewBox="0 0 16 14" fill="#1877f2"><path d="M0 1.500Q0 0 1.500 0h4.300q1 0 1.600 1.500L8 2h6.500Q16 2 16 3.500v9q0 1.500-1.500 1.500h-13Q0 14 0 12.500z" /></svg>
          <svg width="16" height="16" viewBox="0 0 16 16" fill="#1877f2"><rect width="7" height="7" rx="2" /><rect x="9" width="7" height="7" rx="2" /><rect y="9" width="7" height="7" rx="2" /><rect x="9" y="9" width="7" height="7" rx="2" /></svg>
          <TreeName $track={-0.04} $color="#54585f">The Open Mind Public...</TreeName>
          <Dots />
        </TreeRow>
        <TreeRow $edge="#63be09" $bg="#f4f9ec" $indent={37}>
          <svg width="15" height="14" viewBox="0 0 15 14" fill="none" stroke="#3c3f44"><rect x=".6" y=".6" width="12.800" height="12.800" rx="2" strokeWidth="1.200" /><path d="M3 3.500h1.500M6 3.500h5" strokeWidth="1.300" /></svg>
          <TreeName $track={-0.07} $color="#54585f">Tailored messages ...</TreeName>
          <svg width="22" height="16" viewBox="0 0 22 16"><circle cx="8" cy="8" r="7.400" fill="#fff" stroke="#3578e5" strokeWidth="1.200" /><path d="M8 0a8 8 0 0 1 0 16z" fill="#3578e5" /></svg>
          <Dots />
        </TreeRow>
      </TreePanel>
    </>
  );
}

function EditorPane() {
  return (
    <Editor>
      <Label>Reach people living in or recently in this location.</Label>
      <LocationBox>
        <Country>
          <Label>India</Label>
          <Place>
            <Pin w={16} fill="#0ba50b" />
            <Gap $w={14} />
            <Label $track={-0.01}>(26.2545, 85.8315)</Label>
            <Gap $w={28} />
            <Label>+ 25 km</Label>
            <Gap $w={11} />
            <Caret w={11} fill="#111" />
          </Place>
        </Country>
        <SearchRow>
          <Pin w={12.5} fill="#0ba50b" />
          <Gap $w={8} />
          <IncludeLabel>Include</IncludeLabel>
          <Gap $w={12} />
          <Caret w={9} fill="#606770" />
          <Gap $w={18} />
          <Magnifier size={17} w={1.9} color="#3e4248" />
          <Gap $w={11} />
          <Label $color="#65696f">Search locations</Label>
          <Gap />
          <Label>Browse</Label>
        </SearchRow>
        <MapFrame><MapArt /></MapFrame>
        <MapInfo><Info size={16} fill="#a3a9ad" /></MapInfo>
        <MapControls>
          <MapButton $mb={24}><svg width="10" height="6" viewBox="0 0 10 6"><path d="M.8 5.200L5 1l4.200 4.200" fill="none" stroke="#56616a" strokeWidth="1.900" /></svg></MapButton>
          <MapButton $hot><svg width="12" height="12" viewBox="0 0 12 12"><path d="M6 .5v11M.5 6h11" stroke="#65717a" strokeWidth="1.700" /></svg></MapButton>
          <MapButton><svg width="12" height="2" viewBox="0 0 12 2"><path d="M.5 1h11" stroke="#65717a" strokeWidth="1.700" /></svg></MapButton>
          <MapButton $h={35}><svg width="16" height="17" viewBox="0 0 16 17"><path d="M.7 4V2.500q0-1.500 1.500-1.500H4M12 1h1.800q1.500 0 1.500 1.500V4M15.300 13v1.500q0 1.500-1.500 1.500H12M4 16H2.200Q.7 16 .7 14.500V13" fill="none" stroke="#56616a" strokeWidth="1.300" /><path d="M8 2.500a5 5 0 0 1 5 5c0 3-3 5-5 8-2-3-5-5-5-8a5 5 0 0 1 5-5zm0 3a2 2 0 1 0 0 4 2 2 0 0 0 0-4z" fill="#56616a" fillRule="evenodd" /></svg></MapButton>
        </MapControls>
        <Tooltip>Zoom In</Tooltip>
        <DropPin><Pin w={9} fill="#385898" /><Label $size={13} $weight={500} $track={0.08}>Drop Pin</Label></DropPin>
      </LocationBox>
      <Label $size={12} $color="#4267b2">Add locations in bulk</Label>
      <Heading $mt={13} $weight={500}>Age</Heading>
      <Label $line={28}>18 - 65+</Label>
      <Heading $mt={12} $weight={500}>Gender</Heading>
      <Label $line={28}>All genders</Label>
      <Heading $mt={12} $weight={500} $track={0.05}>
        Advantage detailed targeting
        <svg width="12" height="14" viewBox="0 0 12 14"><path d="M6 0l1.800 5L12 7 7.800 9 6 14 4.200 9 0 7l4.200-2z" fill="#000" /></svg>
      </Heading>
      <Notice>
        <svg width="16" height="16" viewBox="0 0 16 16" fill="none" stroke="#3578e5"><circle cx="8" cy="8" r="7.300" strokeWidth="1.200" /><path d="M8 4v1.500M6.500 7.500H8v4M6.500 11.500h3" strokeWidth="1.200" /></svg>
      </Notice>
    </Editor>
  );
}

function SidePane() {
  return (
    <Side>
      <Card $h={262}>
        <Line $mt={16} $gap={5}>
          <Label $size={16} $weight={500} $track={0.04} $color="#444">Audience definition</Label><Info />
        </Line>
        <Line $mt={15}><Label $size={12}>Your audience selection is fairly broad.</Label></Line>
        <Line $mt={18} $spread>
          <Segment $w={103} $c="#ffe9e4" /><Segment $w={104} $c="#63be09" /><Segment $w={103} $c="#fff0cc" />
        </Line>
        <Line $mt={10} $spread><Label $size={12}>Specific</Label><Label $size={12}>Broad</Label></Line>
        <Rule $m="26px 0 10px" />
        <Line $gap={5}>
          <Label $size={12} $track={-0.045}>Estimated audience size:&nbsp; 1,500,000 - 1,700,000</Label>
          <svg width="12" height="15" viewBox="0 0 12 15"><circle cx="6" cy="6" r="6" fill="#3b3b3d" /><path d="M5 2.300h2v1.600H5zM4.400 5H7v3.600h.8v1.100H4.300V8.600h.9V6.100h-.8z" fill="#fff" /></svg>
        </Line>
        <Line $mt={14} $gap={8}>
          <svg width="20" height="48" viewBox="0 0 20 48" fill="none" stroke="#777"><path d="M.5 14l2-2 3.500 4 3-7 6 5 3-10.500" strokeWidth="1.200" /><g fill="#777" stroke="none"><circle cx="6" cy="16" r="2" /><circle cx="9" cy="9.500" r="2" /><circle cx="15" cy="14" r="2" /><circle cx="18" cy="3.500" r="2" /></g></svg>
          <Paragraph>
            Estimates may vary significantly over time based on<br />your targeting selections and available data and do<br />not reflect Advantage audience options.
          </Paragraph>
        </Line>
      </Card>
      <Card $h={330}>
        <Line $mt={16}><Label $size={16} $weight={500} $track={0.03} $color="#444">Estimated daily results</Label></Line>
        <Line $mt={15} $gap={4}><Label>Reach</Label><Info /></Line>
        <Line $mt={7}><Label $size={18} $weight={500} $color="#1c1e21" $track={0.1}>27K-77K</Label></Line>
        <Bar $mt={6} $v={83} />
        <Line $mt={19} $gap={4}><Label>Conversations</Label><Info /></Line>
        <Line $mt={7}><Label $size={18} $weight={500} $color="#1c1e21" $track={0.2}>14-42</Label></Line>
        <Bar $mt={6} $v={181} />
        <Rule $m="16px -16px 12px" />
        <Paragraph>
          The accuracy of estimates is based on factors such as past<br />campaign data, the budget you entered, market data,<br />targeting criteria and ad placements. Numbers are provided<br />to give you an idea of performance for your budget, but are<br />only estimates and don't guarantee results.
        </Paragraph>
      </Card>
    </Side>
  );
}

function SystemBar() {
  return (
    <Taskbar>
      <StartOrb><Orb /></StartOrb>
      <TaskButton><LyncTask /></TaskButton>
      <TaskButton><WallTask /></TaskButton>
      <TaskButton><ChromeTask letter="S" color="#6b9f32" /></TaskButton>
      <TaskButton><ChromeTask letter="P" color="#0b539b" /></TaskButton>
      <TaskButton $active><ChromeTask letter="T" color="#455a64" /></TaskButton>
      <TaskButton><NotepadTask /></TaskButton>
      <TaskButton><PhotoTask /></TaskButton>
      <Tray>
        <svg width="8" height="5" viewBox="0 0 8 5"><path d="M4 0l4 4.500H0z" fill="#fff" /></svg>
        <Gap $w={17} />
        <svg width="9" height="14" viewBox="0 0 9 14"><path d="M2.500 0h4v2H9v12H0V2h2.500z" fill="#fff" /><path d="M1.500 3.500h6v9h-6z" fill="#123a68" /><path d="M2.500 5.500h4v6h-4z" fill="#fff" /></svg>
        <Gap $w={12} />
        <svg width="15" height="14" viewBox="0 0 15 14"><path d="M0 4h2.500L7 0v14L2.500 10H0z" fill="#fff" /><path d="M9 5q1.500 2 0 4M11 3.500q2.500 3.500 0 7M12.800 2q3.500 5 0 10" fill="none" stroke="#fff" strokeWidth="1" /></svg>
        <Gap $w={9} />
        <svg width="15" height="12" viewBox="0 0 15 12" fill="#fff"><path d="M0 9h2v3H0zM3.200 7h2v5h-2zM6.400 5h2v7h-2zM9.600 2.500h2V12h-2zM12.800 0h2v12h-2z" /></svg>
        <Clock><div>4:04 PM</div><div>02-Apr-24</div></Clock>
        <ShowDesktop />
      </Tray>
    </Taskbar>
  );
}

export default function App() {
  return (
    <Screen>
      <Global />
      <Browser />
      <Page>
        <LeftNav />
        <CampaignTree />
        <Workspace>
          <Columns>
            <EditorPane />
            <SidePane />
            <ScrollTrack><ScrollThumb /></ScrollTrack>
          </Columns>
          <Footer>
            <svg width="16" height="16" viewBox="0 0 16 16" fill="none" strokeWidth="1.600"><circle cx="8" cy="8" r="6.700" stroke="#dadde1" /><path d="M9.500 1.500A6.700 6.700 0 1 1 2 11" stroke="#3b82ec" /></svg>
            <Gap $w={8} />
            <StatusText $track={-0.07} $color="#75797f">Verifying your edits...</StatusText>
            <NextButton>Next</NextButton>
          </Footer>
        </Workspace>
      </Page>
      <SystemBar />
    </Screen>
  );
}
